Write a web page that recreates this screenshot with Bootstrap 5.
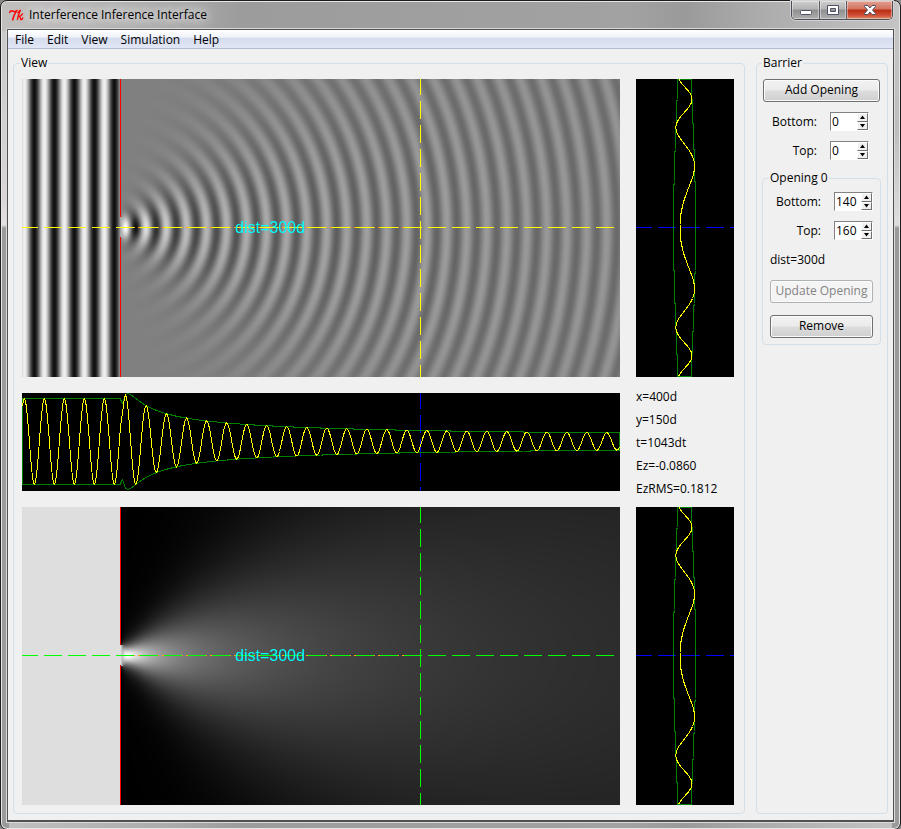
<!DOCTYPE html>
<html lang="en">
<head>
<meta charset="utf-8">
<meta name="viewport" content="width=device-width, initial-scale=1">
<title>Interference Inference Interface</title>
<link href="https://cdn.jsdelivr.net/npm/bootstrap@5.3.0/dist/css/bootstrap.min.css" rel="stylesheet">
<style>
  body { font: 12px/16px "Open Sans", "Noto Sans", sans-serif; color: #000; background: #8a8a8a; }
  .app-window {
    border: 1px solid #1c1c1c; border-radius: 7px; padding: 0 7px 7px;
    background:
      linear-gradient(#c9c9c9, #d9d6d5 166px, #e4e2e0 194px, #9c9a99 197px, #9a9a9a) left 30px / 8px 100% no-repeat,
      linear-gradient(#c4c4c4, #bdbdbd 100px, #dedede 194px, #9a9a9a 197px, #9a9a9a) right 30px / 8px 100% no-repeat,
      linear-gradient(90deg, #c2c0bf, #aaa 180px, #9c9c9c 240px, #a2a2a2 70%, #9a9a9a 76%, #ababab 84%, #c4c4c4);
    box-shadow: inset 0 0 0 1px #e6e6e6;
  }
  .title-bar { height: 28px; }
  .title-text { padding: 0 8px 0 4px; text-shadow: 0 0 8px #eee, 0 0 12px #e6e6e6, 0 0 16px #ddd; }
  .caption-buttons { border: 1px solid #4c4f57; border-top: 0; border-radius: 0 0 5px 5px; overflow: hidden; box-shadow: 0 0 0 1px #d2d2d2; }
  .caption-buttons .btn { width: 27px; height: 18px; border-radius: 0; border: 0; box-shadow: inset 0 0 0 1px #ffffff66; background: linear-gradient(#cfcfcf, #b3b3b3 45%, #8f8f90 50%, #aeaeae); }
  .caption-buttons .btn + .btn { border-left: 1px solid #5b5e66; }
  .caption-buttons .btn.close-btn { width: 46px; background: linear-gradient(#e3a192, #d2715c 45%, #b92c12 50%, #cf5138 80%, #de8b68); }
  .client { border: 1px solid #505050; border-width: 1px 1px 2px; background: #f0f0f0; box-shadow: 0 0 0 1px #dadada; margin: 0 -1px; }
  .menu-bar { padding: 0 1px; height: 19px; border-bottom: 1px solid #b5bdd4; background: linear-gradient(#fff, #f0f3fa 40%, #d5dcee 45%, #e0e6f5); }
  .menu-bar .nav-link { padding: 2px 6px 0; margin-right: 1px; color: #000; font-size: 12px; line-height: 16px; }
  .main-area { padding: 6px 5px 6px; gap: 11px; }
  .group-box { border: 1px solid #d3dfe8; border-radius: 4px; min-width: 0; margin: 0; }
  .group-box > legend { float: none; width: auto; margin: 0 0 0 -2px; padding: 0 1px; font-size: 12px; line-height: 16px; }
  .view-group { padding: 8px 10px 8px 8px; flex: 1 1 0; }
  .barrier-group { padding: 8px 6px 6px 5px; flex: 0 0 132px; }
  .barrier-group > legend { margin-left: 0; }
  .opening-group { padding: 6px 7px; }
  .opening-group > legend { margin-left: -1px; }
  .plots { display: grid; grid-template-columns: minmax(0, 598fr) minmax(0, 98fr); gap: 16px; }
  .plot { position: relative; background: #000; }
  .plot canvas, .plot svg { display: block; width: 100%; height: auto; }
  .plot canvas + svg { position: absolute; inset: 0; }
  .plot line, .plot polyline, .plot polygon { fill: none; stroke-width: 1; shape-rendering: crispEdges; }
  .plot text { font: 16px "Liberation Sans", Arial, sans-serif; fill: #0ff; text-anchor: middle; }
  .dash { stroke-dasharray: 18 6; stroke-dashoffset: 2; }
  .dist-line { stroke: #ffa500; stroke-dasharray: 21 3; stroke-dashoffset: 7; }
  .readouts { gap: 7px; margin: -4px 0 -6px; }
  .stack-rows { gap: 10px; }
  .stack-tail { gap: 12px; padding-top: 12px; }
  .field-row { gap: 13px; height: 19px; }
  .inset-right { margin-right: 12px; }
  .native-btn { font-size: 12px; line-height: 16px; padding: 2px 0 3px; border: 1px solid #707070; border-radius: 3px; color: #000; background: linear-gradient(#f2f2f2, #ebebeb 49%, #dddddd 51%, #cfcfcf); box-shadow: inset 0 0 0 1px #fbfbfb; }
  .native-btn:disabled { color: #838383; border-color: #adb2b5; background: #f4f4f4; opacity: 1; }
  .add-btn { margin: 0 1px; }
  .spin { width: 39px; height: 19px; border: 1px solid; border-color: #828282 #fff #fff #828282; background: #fff; }
  .spin input { width: 26px; min-width: 0; padding: 0 0 0 1px; border: 0; background: none; font: inherit; color: #000; appearance: textfield; outline: 0; }
  .spin input::-webkit-inner-spin-button { appearance: none; margin: 0; }
  .spin button { flex: 1 1 0; width: 11px; padding: 0; border: 1px solid; border-color: #fff #707070 #707070 #fff; background: #f0f0f0; line-height: 0; display: flex; align-items: center; justify-content: center; }
  .spin button svg { flex: none; }
</style>
<script src="https://cdn.jsdelivr.net/npm/bootstrap@5.3.0/dist/js/bootstrap.bundle.min.js"></script>
</head>
<body>
<div class="app-window d-flex flex-column min-vh-100">
  <header class="title-bar d-flex align-items-start justify-content-between">
    <div class="d-flex align-items-center align-self-center">
      <svg width="17" height="14" viewBox="0 0 17 14" fill="none" stroke="#f00" aria-hidden="true">
        <path d="M1.500 5 2.500 3h2l2 .8L8.500 3 6 7.500 4.500 12.500" stroke-width="1.500"/>
        <path d="M9.500 5l3-3-2 5-1.200 5M10 8.500l2.500-.5 2.500-2.500M12 8.500l.8 3h1l1.400-2" stroke-width="1.300"/>
      </svg>
      <span class="title-text">Interference Inference Interface</span>
    </div>
    <div class="caption-buttons d-flex">
      <button class="btn p-0 d-flex align-items-center justify-content-center" type="button" aria-label="Minimize">
        <svg width="14" height="14" viewBox="0 0 14 14"><rect x="1.500" y="7.500" width="11" height="4" rx="1" fill="#fff" stroke="#4d5066"/></svg>
      </button>
      <button class="btn p-0 d-flex align-items-center justify-content-center" type="button" aria-label="Maximize">
        <svg width="14" height="14" viewBox="0 0 14 14"><path fill-rule="evenodd" d="M1.500 2.500h11v9h-11zM4.500 5.500v3h5v-3z" fill="#fff" stroke="#4d5066"/></svg>
      </button>
      <button class="btn close-btn p-0 d-flex align-items-center justify-content-center" type="button" aria-label="Close">
        <svg width="14" height="14" viewBox="0 0 14 14"><path d="M1.500 2.500h3.500l2 2.500 2-2.500h3.500v1L9.500 7l3 3.500v1H9L7 9l-2 2.500H1.500v-1l3-3.500-3-3.500z" fill="#fff" stroke="#4d5066"/></svg>
      </button>
    </div>
  </header>

  <div class="client d-flex flex-column flex-grow-1">
    <nav class="menu-bar nav flex-nowrap" aria-label="Main menu">
      <a class="nav-link" href="#">File</a>
      <a class="nav-link" href="#">Edit</a>
      <a class="nav-link" href="#">View</a>
      <a class="nav-link" href="#">Simulation</a>
      <a class="nav-link" href="#">Help</a>
    </nav>

    <main class="main-area d-flex flex-grow-1">
      <fieldset class="group-box view-group">
        <legend>View</legend>
        <div class="plots">
          <div class="plot">
            <canvas id="field" width="598" height="298"></canvas>
            <svg viewBox="0 0 598 298">
              <line class="dist-line" x1="99" y1="148.500" x2="398" y2="148.500"/>
              <line class="dash" x1="0" y1="148.500" x2="598" y2="148.500" stroke="#ff0"/>
              <line class="dash" x1="398.500" y1="0" x2="398.500" y2="298" stroke="#ff0"/>
              <text x="248" y="154">dist=300d</text>
            </svg>
          </div>
          <div class="plot">
            <svg viewBox="0 0 98 298">
              <line class="dash" x1="0" y1="148.500" x2="98" y2="148.500" stroke="#00f"/>
              <polygon class="side-env" stroke="#008000"/>
              <polyline class="side-wave" stroke="#ff0"/>
            </svg>
          </div>
          <div class="plot">
            <svg viewBox="0 0 598 98">
              <line class="dash" x1="398.500" y1="0" x2="398.500" y2="98" stroke="#00f"/>
              <polygon id="axis-env" stroke="#008000"/>
              <polyline id="axis-wave" stroke="#ff0"/>
            </svg>
          </div>
          <div class="readouts d-flex flex-column">
            <span>x=400d</span>
            <span>y=150d</span>
            <span>t=1043dt</span>
            <span>Ez=-0.0860</span>
            <span>EzRMS=0.1812</span>
          </div>
          <div class="plot">
            <canvas id="rms" width="598" height="298"></canvas>
            <svg viewBox="0 0 598 298">
              <line class="dist-line" x1="99" y1="148.500" x2="398" y2="148.500"/>
              <line class="dash" x1="0" y1="148.500" x2="598" y2="148.500" stroke="#0f0"/>
              <line class="dash" x1="398.500" y1="0" x2="398.500" y2="298" stroke="#0f0"/>
              <text x="248" y="154">dist=300d</text>
            </svg>
          </div>
          <div class="plot">
            <svg viewBox="0 0 98 298">
              <line class="dash" x1="0" y1="148.500" x2="98" y2="148.500" stroke="#00f"/>
              <polygon class="side-env" stroke="#008000"/>
              <polyline class="side-wave" stroke="#ff0"/>
            </svg>
          </div>
        </div>
      </fieldset>

      <fieldset class="group-box barrier-group">
        <legend>Barrier</legend>
        <div class="d-flex flex-column stack-rows">
          <button class="native-btn add-btn" type="button">Add Opening</button>
          <div class="field-row inset-right d-flex justify-content-end align-items-center">
            <label for="new-bottom">Bottom:</label>
            <div class="spin d-flex"><input id="new-bottom" type="number" value="0"><div class="d-flex flex-column"><button type="button" data-step="1" aria-label="Increase"></button><button type="button" data-step="-1" aria-label="Decrease"></button></div></div>
          </div>
          <div class="field-row inset-right d-flex justify-content-end align-items-center">
            <label for="new-top">Top:</label>
            <div class="spin d-flex"><input id="new-top" type="number" value="0"><div class="d-flex flex-column"><button type="button" data-step="1" aria-label="Increase"></button><button type="button" data-step="-1" aria-label="Decrease"></button></div></div>
          </div>
          <fieldset class="group-box opening-group">
            <legend>Opening 0</legend>
            <div class="d-flex flex-column stack-rows">
              <div class="field-row d-flex justify-content-end align-items-center">
                <label for="open-bottom">Bottom:</label>
                <div class="spin d-flex"><input id="open-bottom" type="number" value="140"><div class="d-flex flex-column"><button type="button" data-step="1" aria-label="Increase"></button><button type="button" data-step="-1" aria-label="Decrease"></button></div></div>
              </div>
              <div class="field-row d-flex justify-content-end align-items-center">
                <label for="open-top">Top:</label>
                <div class="spin d-flex"><input id="open-top" type="number" value="160"><div class="d-flex flex-column"><button type="button" data-step="1" aria-label="Increase"></button><button type="button" data-step="-1" aria-label="Decrease"></button></div></div>
              </div>
            </div>
            <div class="d-flex flex-column stack-tail">
              <span>dist=300d</span>
              <button class="native-btn" type="button" disabled>Update Opening</button>
              <button class="native-btn" type="button">Remove</button>
            </div>
          </fieldset>
        </div>
      </fieldset>
    </main>
  </div>
</div>

<script>
  // Plane wave meeting a barrier with a single slit.
  const W = 598, H = 298, BARRIER = 98, MID = 148, HALF = 10, NEAR = 4;
  const LAMBDA = 20, K = 2 * Math.PI / LAMBDA, AMP = 0.874, PHASE = 3.9;

  function planeWave(dx) {
    const p = K * (dx - PHASE);
    return [AMP * Math.cos(p), AMP * Math.sin(p)];
  }

  // Sum over point sources across the slit.
  function diffracted(dx, y) {
    let re = 0, im = 0;
    for (let s = -HALF + 0.5; s < HALF; s++) {
      const r = Math.hypot(dx, y - MID - s);
      const a = dx / r / Math.sqrt(r), p = K * (r - PHASE) - Math.PI / 4;
      re += a * Math.cos(p);
      im += a * Math.sin(p);
    }
    const n = AMP / Math.sqrt(LAMBDA);
    return [re * n, im * n];
  }

  // Complex field at pixel (x, y); the two solutions blend just behind the slit.
  function fieldAt(x, y) {
    const dx = x - BARRIER;
    if (dx <= 0) return planeWave(dx);
    if (dx >= NEAR || Math.abs(y - MID) > HALF) return diffracted(dx, y);
    const a = planeWave(0), b = diffracted(NEAR, y), t = dx / NEAR;
    return [a[0] + (b[0] - a[0]) * t, a[1] + (b[1] - a[1]) * t];
  }

  const waveCtx = document.getElementById('field').getContext('2d');
  const rmsCtx = document.getElementById('rms').getContext('2d');
  const wave = waveCtx.createImageData(W, H), rms = rmsCtx.createImageData(W, H);
  for (let y = 0; y < H; y++) {
    for (let x = 0; x < W; x++) {
      const i = (y * W + x) * 4;
      const wall = x === BARRIER && Math.abs(y - MID + 0.5) > HALF;
      const [re, im] = fieldAt(x, y);
      const g = 128 + 127 * re, m = 254 * Math.hypot(re, im);
      wave.data.set(wall ? [255, 0, 0, 255] : [g, g, g, 255], i);
      rms.data.set(wall ? [255, 0, 0, 255] : [m, m, m, 255], i);
    }
  }
  waveCtx.putImageData(wave, 0, 0);
  rmsCtx.putImageData(rms, 0, 0);

  // Cross-sections: along the axis, and along the cursor column.
  function section(length, sample, place) {
    const line = [], upper = [], lower = [];
    for (let i = 0; i < length; i++) {
      const [re, im] = sample(i), m = Math.hypot(re, im) * 49;
      line.push(place(i + 0.5, re * 49));
      upper.push(place(i + 0.5, m));
      lower.unshift(place(i + 0.5, -m));
    }
    return { line: line.join(' '), env: upper.concat(lower).join(' ') };
  }
  const axis = section(W, i => fieldAt(i, MID), (i, v) => `${i},${(48.5 - v).toFixed(1)}`);
  document.getElementById('axis-wave').setAttribute('points', axis.line);
  document.getElementById('axis-env').setAttribute('points', axis.env);
  const side = section(H, i => fieldAt(398, i), (i, v) => `${(48.5 + v).toFixed(1)},${i}`);
  document.querySelectorAll('.side-wave').forEach(e => e.setAttribute('points', side.line));
  document.querySelectorAll('.side-env').forEach(e => e.setAttribute('points', side.env));

  // Spin buttons.
  document.querySelectorAll('.spin button').forEach(b => {
    const up = b.dataset.step === '1';
    b.innerHTML = `<svg width="7" height="4" viewBox="0 0 7 4"><path d="${up ? 'M1 4 3.5 0.5 6 4z' : 'M1 0 3.5 3.5 6 0z'}"/></svg>`;
    b.addEventListener('click', () => {
      const input = b.closest('.spin').querySelector('input');
      input.value = Number(input.value) + Number(b.dataset.step);
    });
  });
</script>
</body>
</html>
